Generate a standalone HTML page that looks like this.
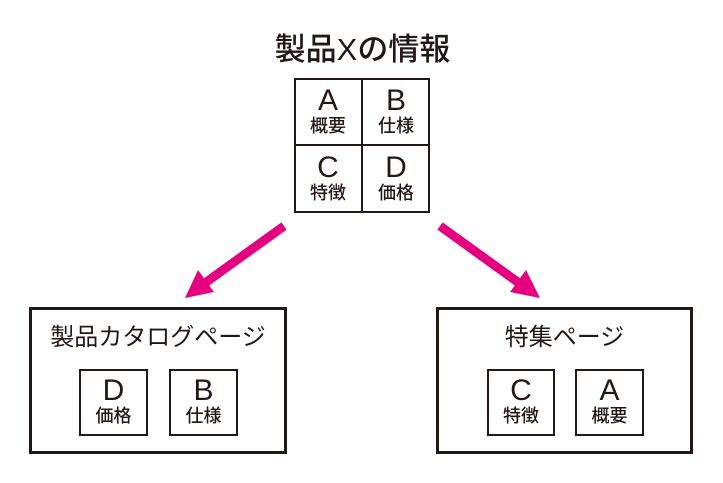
<!DOCTYPE html>
<html><head><meta charset="utf-8"><style>
body{margin:0;width:723px;height:483px;background:#fff;position:relative;font-family:"Liberation Sans","Noto Sans CJK JP",sans-serif;color:#231815;overflow:hidden}
.a{position:absolute;box-sizing:border-box}
.cell{position:absolute;text-align:center;box-sizing:border-box}
.L{font-size:30px;line-height:28px;display:block}
.s{font-size:18px;line-height:22px;display:block;font-weight:500}
</style></head><body>
<div class="a" style="left:0;top:30px;width:723px;text-align:center;font-size:31px;font-weight:500;line-height:40px;padding-left:2px">製品Xの情報</div>
<div class="a" style="left:294px;top:78px;width:136px;height:135px;border:2px solid #231815"></div>
<div class="a" style="left:361px;top:78px;width:2px;height:135px;background:#231815"></div>
<div class="a" style="left:294px;top:144px;width:136px;height:2px;background:#231815"></div>
<div class="cell" style="left:294px;top:87px;width:68px"><span class="L">A</span><span class="s">概要</span></div>
<div class="cell" style="left:362px;top:87px;width:68px"><span class="L">B</span><span class="s">仕様</span></div>
<div class="cell" style="left:294px;top:154px;width:68px"><span class="L">C</span><span class="s">特徴</span></div>
<div class="cell" style="left:362px;top:154px;width:68px"><span class="L">D</span><span class="s">価格</span></div>
<svg class="a" style="left:0;top:0" width="723" height="483">
<line x1="284" y1="226" x2="205" y2="283" stroke="#e4007f" stroke-width="9"/>
<polygon points="185,298 198,270 214,292" fill="#e4007f"/>
<line x1="440" y1="226" x2="519" y2="283" stroke="#e4007f" stroke-width="9"/>
<polygon points="540,298 526,270 510,292" fill="#e4007f"/>
</svg>
<div class="a" style="left:29px;top:307px;width:258px;height:147px;border:3px solid #231815"></div>
<div class="a" style="left:29px;top:323px;width:258px;text-align:center;font-size:24px;line-height:30px">製品カタログページ</div>
<div class="a" style="left:436px;top:307px;width:257px;height:147px;border:3px solid #231815"></div>
<div class="a" style="left:436px;top:323px;width:257px;text-align:center;font-size:24px;line-height:30px">特集ページ</div>
<div class="cell" style="left:79px;top:369px;width:69px;height:67px;border:2px solid #231815;padding-top:6px"><span class="L">D</span><span class="s">価格</span></div>
<div class="cell" style="left:169px;top:369px;width:69px;height:67px;border:2px solid #231815;padding-top:6px"><span class="L">B</span><span class="s">仕様</span></div>
<div class="cell" style="left:487px;top:369px;width:68px;height:67px;border:2px solid #231815;padding-top:6px"><span class="L">C</span><span class="s">特徴</span></div>
<div class="cell" style="left:575px;top:369px;width:69px;height:67px;border:2px solid #231815;padding-top:6px"><span class="L">A</span><span class="s">概要</span></div>
</body></html>
